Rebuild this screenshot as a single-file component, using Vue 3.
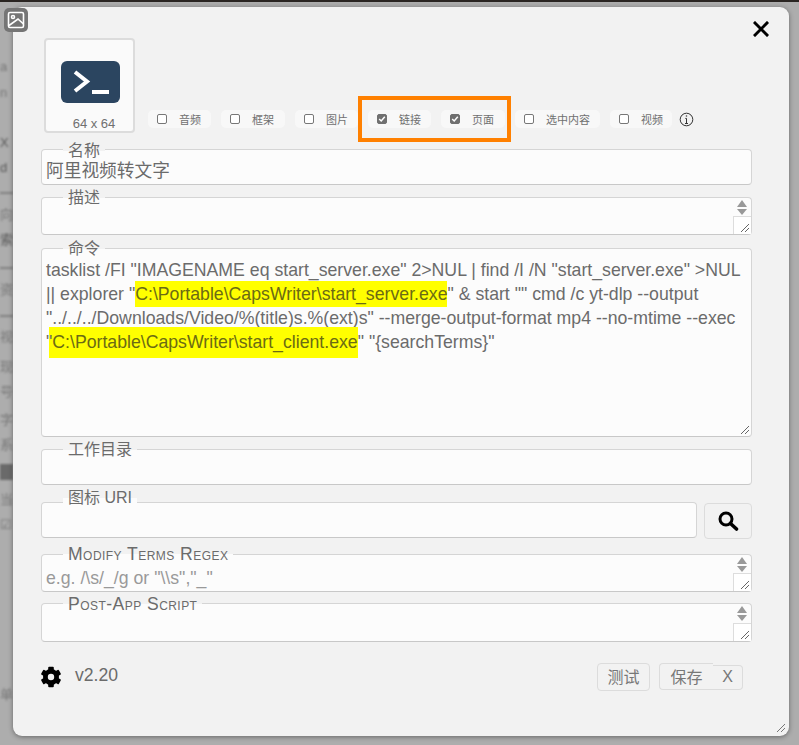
<script setup>
const chips = [
  { label: '音频', on: false, w: 63 },
  { label: '框架', on: false, w: 64 },
  { label: '图片', on: false, w: 63 },
  { label: '链接', on: true, w: 63 },
  { label: '页面', on: true, w: 64 },
  { label: '选中内容', on: false, w: 85 },
  { label: '视频', on: false, w: 62 }
]
const blurs = [
  { t: 'a', gap: 57 }, { t: 'n', gap: 10 }, { t: 'X', gap: 34, dark: true }, { t: 'd', gap: 9, dark: true },
  { rule: true, gap: 16 }, { t: '向', gap: 13 }, { t: '索', gap: 9, dark: true }, { rule: true, gap: 19 },
  { t: '资', gap: 13 }, { rule: true, gap: 17 }, { t: '视', gap: 12 }, { t: '现', gap: 14 },
  { t: '号', gap: 9 }, { t: '字', gap: 12 }, { t: '系', gap: 9 }, { block: true, gap: 11 },
  { t: '当', gap: 12 }, { t: '☑', gap: 9 }, { t: '单', gap: 154 }
]
const teeth = [0, 60, 120, 180, 240, 300]
</script>

<template>
  <div class="page">
    <div class="backdrop">
      <template v-for="(b, i) in blurs" :key="i">
        <i v-if="b.rule" class="blur-rule" :style="{ marginTop: b.gap + 'px' }"></i>
        <i v-else-if="b.block" class="blur-block" :style="{ marginTop: b.gap + 'px' }"></i>
        <span v-else class="blur-char" :class="{ dark: b.dark }" :style="{ marginTop: b.gap + 'px' }">{{ b.t }}</span>
      </template>
    </div>
    <div class="thumb-badge">
      <svg width="24" height="24" viewBox="0 0 24 24" fill="none" stroke="#fff" stroke-width="1.6">
        <rect x="4.5" y="4.5" width="15" height="15" rx="1.5" />
        <circle cx="9" cy="9" r="1.5" />
        <path d="M5 17.5 L14 11 L19.5 16" />
      </svg>
    </div>
    <main class="modal">
      <button class="close" aria-label="close">
        <svg width="16" height="16" viewBox="0 0 16 16"><path d="M2 2 L14 14 M14 2 L2 14" stroke="#000" stroke-width="3" stroke-linecap="square" /></svg>
      </button>

      <div class="top-row">
        <div class="icon-box">
          <svg class="term" width="59" height="42" viewBox="0 0 59 42">
            <rect width="59" height="42" rx="6" fill="#2b4560" />
            <path d="M14 11 L26 20.5 L14 30" fill="none" stroke="#fff" stroke-width="4" />
            <rect x="31" y="29" width="17" height="4" fill="#fff" />
          </svg>
          <span class="size">64 x 64</span>
        </div>
        <div class="chips">
          <label v-for="c in chips" :key="c.label" class="chip" :style="{ width: c.w + 'px' }">
            <span class="box" :class="{ on: c.on }">
              <svg v-if="c.on" width="8" height="8" viewBox="0 0 8 8"><path d="M1.2 4 L3.2 6 L6.8 1.8" fill="none" stroke="#fff" stroke-width="1.5" /></svg>
            </span>
            <span class="chip-text">{{ c.label }}</span>
          </label>
          <svg class="info" width="15" height="15" viewBox="0 0 15 15" fill="none" stroke="#333" stroke-width="1">
            <circle cx="7.5" cy="7.5" r="6.3" />
            <path d="M7.5 6.4 V11.5 M6 11.5 H9 M6.3 6.4 H7.5" />
            <path d="M7.5 3.4 V4.6" stroke-width="1.3" />
          </svg>
        </div>
        <div class="highlight-box"></div>
      </div>

      <div class="field name">
        <span class="legend">名称</span>
        <div class="value">阿里视频转文字</div>
      </div>

      <div class="field desc">
        <span class="legend">描述</span>
        <span class="spin"><i class="up"></i><i class="down"></i></span>
        <span class="grip-box"><svg width="10" height="10" viewBox="0 0 10 10"><path d="M1 9 L9 1 M5 9 L9 5" stroke="#666" stroke-width="1" /></svg></span>
      </div>

      <div class="field command">
        <span class="legend">命令</span>
        <div class="value multi">tasklist /FI "IMAGENAME eq start_server.exe" 2&gt;NUL | find /I /N "start_server.exe" &gt;NUL<br />|| explorer "<mark>C:\Portable\CapsWriter\start_server.exe</mark>" &amp; start "" cmd /c yt-dlp --output<br />"../../../Downloads/Video/%(title)s.%(ext)s" --merge-output-format mp4 --no-mtime --exec<br /><span class="quote">"</span><mark class="tall">C:\Portable\CapsWriter\start_client.exe</mark>" "{searchTerms}"</div>
        <svg class="grip" width="10" height="10" viewBox="0 0 10 10"><path d="M1 9 L9 1 M5 9 L9 5" stroke="#666" stroke-width="1" /></svg>
      </div>

      <div class="field workdir">
        <span class="legend">工作目录</span>
      </div>

      <div class="uri-row">
        <div class="field uri">
          <span class="legend">图标 URI</span>
        </div>
        <button class="search" aria-label="search">
          <svg width="22" height="22" viewBox="0 0 22 22" fill="none" stroke="#000">
            <circle cx="9" cy="9" r="6" stroke-width="3" />
            <path d="M13.5 13.5 L19.5 19" stroke-width="3.6" stroke-linecap="round" />
          </svg>
        </button>
      </div>

      <div class="field regex">
        <span class="legend caps">Modify Terms Regex</span>
        <div class="value placeholder">e.g. /\s/_/g or "\\s","_"</div>
        <span class="spin"><i class="up"></i><i class="down"></i></span>
        <span class="grip-box"><svg width="10" height="10" viewBox="0 0 10 10"><path d="M1 9 L9 1 M5 9 L9 5" stroke="#666" stroke-width="1" /></svg></span>
      </div>

      <div class="field post">
        <span class="legend caps">Post-App Script</span>
        <span class="spin"><i class="up"></i><i class="down"></i></span>
        <span class="grip-box"><svg width="10" height="10" viewBox="0 0 10 10"><path d="M1 9 L9 1 M5 9 L9 5" stroke="#666" stroke-width="1" /></svg></span>
      </div>

      <footer class="footer">
        <svg class="gear" width="22" height="22" viewBox="0 0 22 22">
          <circle cx="11" cy="11" r="5.6" fill="none" stroke="#000" stroke-width="4.8" />
          <rect v-for="t in teeth" :key="t" x="8.2" y="0.8" width="5.6" height="4" rx="1" fill="#000" :transform="`rotate(${t} 11 11)`" />
        </svg>
        <span class="version">v2.20</span>
        <span class="spacer"></span>
        <button class="btn test">测试</button>
        <div class="save-group">
          <button class="btn save">保存</button>
          <button class="btn x">X</button>
        </div>
      </footer>

      <svg class="corner" width="10" height="10" viewBox="0 0 10 10"><path d="M1 9 L9 1 M5 9 L9 5" stroke="#777" stroke-width="1" /></svg>
    </main>
  </div>
</template>

<style>
html, body { margin: 0; padding: 0; }
</style>

<style scoped>
.page {
  position: relative;
  box-sizing: border-box;
  width: 799px;
  height: 745px;
  overflow: hidden;
  border-top: 2px solid #2a2522;
  background: #adadad;
  padding: 5px 0 0 13px;
  font-family: "Liberation Sans", "Noto Sans CJK SC", sans-serif;
  color: #6b6b6b;
}
.backdrop {
  position: absolute;
  left: 0;
  top: 0;
  width: 13px;
  height: 743px;
  display: flex;
  flex-direction: column;
  font-size: 13px;
  line-height: 16px;
  color: #767676;
  filter: blur(1.1px);
}
.blur-char { display: block; height: 16px; white-space: nowrap; }
.blur-char.dark { color: #555; }
.blur-rule { display: block; height: 2px; background: #808080; }
.blur-block { display: block; height: 16px; background: #6a6a6a; }
.thumb-badge {
  position: absolute;
  z-index: 3;
  left: 4px;
  top: 6px;
  width: 24px;
  height: 24px;
  border-radius: 5px;
  background: #757575;
}
.modal {
  position: relative;
  z-index: 2;
  box-sizing: border-box;
  width: 776px;
  height: 729px;
  padding: 31px 37px 0 28px;
  background: #f2f2f2;
  border-radius: 9px;
  box-shadow: 0 1px 5px rgba(0, 0, 0, 0.4);
}
.close {
  position: absolute;
  right: 20px;
  top: 14px;
  padding: 0;
  border: 0;
  background: none;
  line-height: 0;
}
.top-row {
  position: relative;
  display: flex;
  align-items: flex-end;
  height: 95px;
  padding-left: 3px;
}
.icon-box {
  box-sizing: border-box;
  width: 91px;
  height: 95px;
  border: 2px solid #dcdcdc;
  border-radius: 4px;
  background: #fafafa;
  display: flex;
  flex-direction: column;
  align-items: center;
}
.term { margin-top: 21px; margin-left: 1px; }
.size { margin-top: 13px; margin-left: 9px; font-size: 13px; line-height: 15px; color: #707070; }
.chips {
  display: flex;
  align-items: center;
  gap: 10px;
  margin: 0 0 5px 13px;
}
.chip {
  box-sizing: border-box;
  height: 18px;
  padding-left: 9px;
  display: flex;
  align-items: center;
  gap: 12px;
  background: #f8f8f8;
  border-radius: 5px;
}
.box {
  box-sizing: border-box;
  flex: none;
  width: 10px;
  height: 10px;
  border: 1px solid #777;
  border-radius: 2px;
  background: #fff;
  display: flex;
  align-items: center;
  justify-content: center;
}
.box.on { background: #707070; border-color: #707070; }
.chip-text { font-size: 11px; line-height: 18px; padding-top: 1px; color: #707070; white-space: nowrap; }
.info { margin-left: -3px; }
.highlight-box {
  position: absolute;
  left: 317px;
  top: 58px;
  box-sizing: border-box;
  width: 153px;
  height: 46px;
  border: 4px solid #ff8000;
}
.field {
  position: relative;
  box-sizing: border-box;
  border: 1px solid #d5d5d5;
  border-bottom-color: #c8c8c8;
  border-radius: 4px;
  background: #fcfcfc;
  width: 711px;
}
.legend {
  position: absolute;
  left: 21px;
  top: -10px;
  padding: 0 5px;
  background: linear-gradient(#f2f2f2 50%, #fcfcfc 50%);
  font-size: 16px;
  line-height: 20px;
  color: #6b6b6b;
  white-space: nowrap;
}
.caps { font-size: 17.6px; font-variant: small-caps; letter-spacing: 0.45px; }
.value {
  padding: 0 4px;
  font-size: 17.7px;
  color: #6b6b6b;
  white-space: nowrap;
}
.name { height: 36px; margin-top: 16px; }
.name .legend { top: -9px; }
.name .value { line-height: 42px; }
.desc { height: 38px; margin-top: 12px; }
.command { height: 189px; margin-top: 13px; }
.multi { padding-top: 9px; line-height: 24px; }
mark { background: #ffff00; color: #6b6b14; padding: 3px 0; }
mark.tall { padding: 5px 0 6px 3px; margin-left: -3px; }
.quote { position: relative; z-index: 1; }
.grip { position: absolute; right: 1px; bottom: 1px; }
.workdir { height: 36px; margin-top: 12px; }
.uri-row {
  display: flex;
  gap: 7px;
  align-items: flex-start;
  margin-top: 17px;
}
.uri { width: 657px; height: 36px; }
.uri .legend { top: -15px; }
.search {
  box-sizing: border-box;
  width: 48px;
  height: 36px;
  margin-top: 1px;
  border: 1px solid #dcdcdc;
  border-radius: 4px;
  background: #f2f2f2;
  display: flex;
  align-items: center;
  justify-content: center;
  padding: 0;
}
.regex { height: 38px; margin-top: 15px; }
.regex .legend { top: -11px; }
.placeholder { line-height: 46px; height: 38px; color: #999; }
.post { height: 39px; margin-top: 11px; }
.spin {
  position: absolute;
  right: 4px;
  top: 2px;
  display: flex;
  flex-direction: column;
  gap: 2px;
}
.spin i { display: block; width: 0; height: 0; border-left: 5px solid transparent; border-right: 5px solid transparent; }
.spin .up { border-bottom: 7px solid #999; }
.spin .down { border-top: 6px solid #999; }
.grip-box {
  position: absolute;
  right: 0;
  bottom: 0;
  box-sizing: border-box;
  width: 18px;
  height: 18px;
  background: #fff;
  border: 1px solid #ddd;
  border-right: 0;
  border-bottom: 0;
  display: flex;
  align-items: flex-end;
  justify-content: flex-end;
  padding: 0 1px 1px 0;
}
.footer {
  display: flex;
  align-items: flex-start;
  margin-top: 21px;
  height: 30px;
}
.gear { margin-top: 3px; margin-left: -1px; }
.version { margin-left: 13px; font-size: 17.6px; line-height: 24px; color: #6b6b6b; }
.spacer { flex: 1; }
.btn {
  box-sizing: border-box;
  padding: 0 0 2px;
  border: 1px solid #dcdcdc;
  border-radius: 4px;
  background: #f2f2f2;
  color: #777;
  font: 16px "Liberation Sans", "Noto Sans CJK SC", sans-serif;
}
.test { width: 53px; height: 28px; }
.save-group { display: flex; align-items: flex-end; margin: 0 9px 0 9px; height: 27px; }
.save { width: 54px; height: 27px; border-right: 0; border-radius: 4px 0 0 4px; }
.x { width: 30px; height: 25px; border-left: 0; border-radius: 0 4px 4px 0; }
.corner { position: absolute; right: 3px; bottom: 3px; }
</style>
